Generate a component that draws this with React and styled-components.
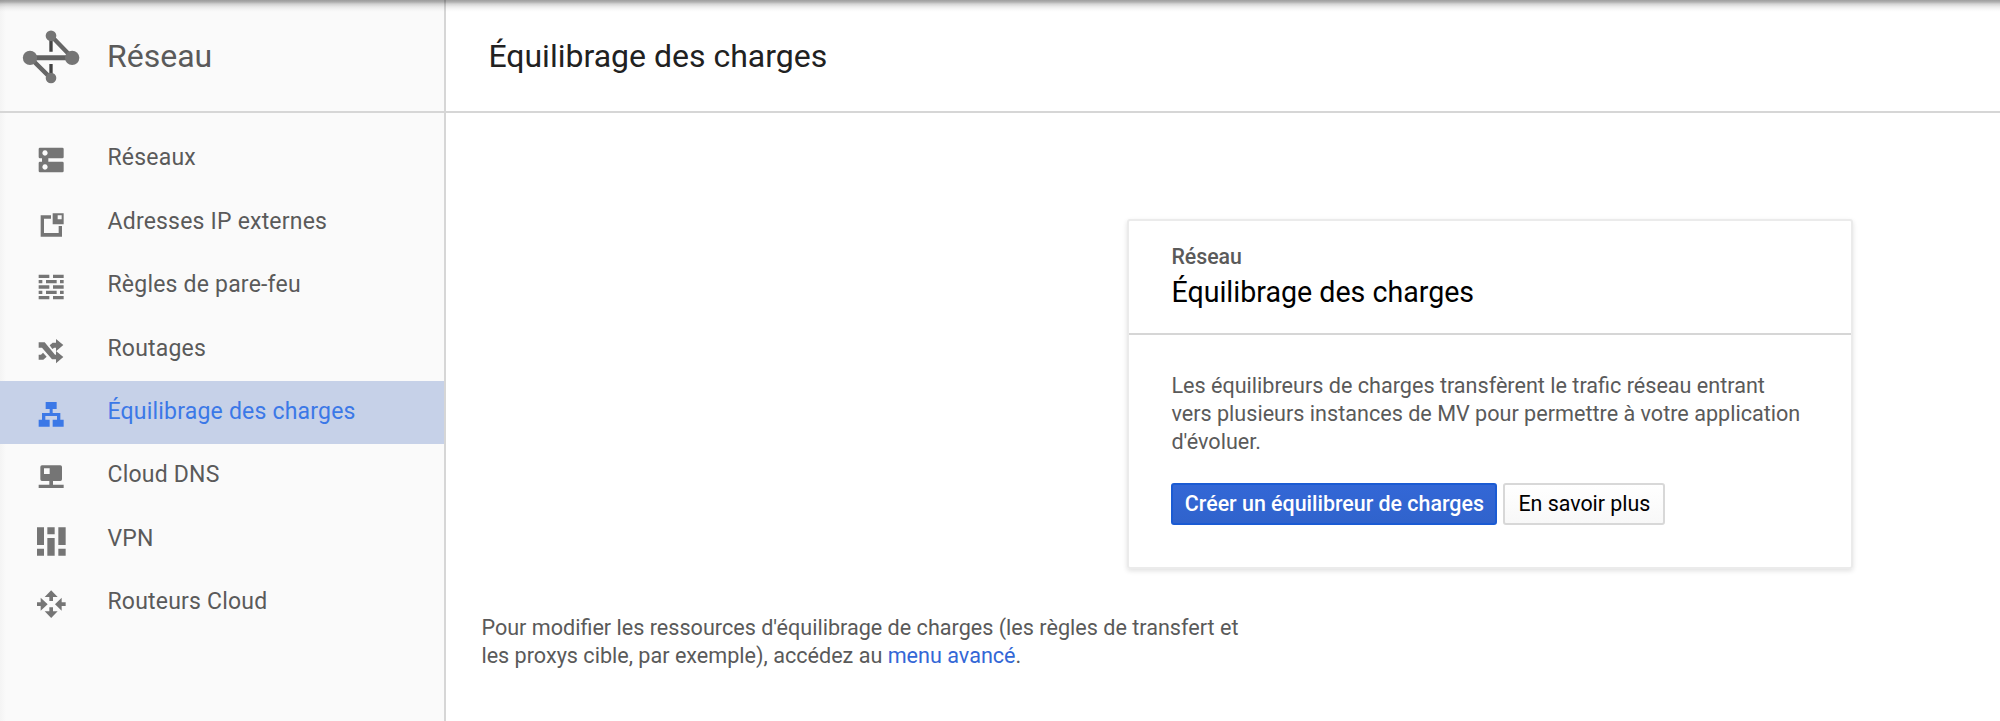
import React from "react";
import styled, { createGlobalStyle } from "styled-components";

const Global = createGlobalStyle`
  *, *::before, *::after { box-sizing: border-box; }
  body {
    margin: 0;
    background: #fff;
    color: #5a5a5a;
    font-family: Roboto, "Liberation Sans", sans-serif;
    overflow: hidden;
  }
`;

const Page = styled.div`
  position: relative;
  display: flex;
  height: 721px;
  overflow: hidden;
`;

const TopShadow = styled.div`
  position: absolute;
  inset: 0 0 auto 0;
  height: 12px;
  pointer-events: none;
  background: linear-gradient(
    rgba(0, 0, 0, 0.38) 0,
    rgba(0, 0, 0, 0.31) 2px,
    rgba(0, 0, 0, 0.17) 4px,
    rgba(0, 0, 0, 0.07) 7px,
    rgba(0, 0, 0, 0.02) 10px,
    rgba(0, 0, 0, 0) 12px
  );
`;

const Sidebar = styled.aside`
  display: flex;
  flex-direction: column;
  width: 446.4px;
  flex: none;
  border-right: 2px solid #d6d6d6;
  background: linear-gradient(90deg, #f4f4f4, #fafafa 6px);
`;

const Bar = styled.header`
  display: flex;
  align-items: center;
  height: 113px;
  flex: none;
  border-bottom: 2px solid #d6d6d6;
  padding-left: ${(p) => p.$inset}px;
`;

const Heading = styled.h1`
  margin: 1px 0 0;
  font-size: 32px;
  line-height: 40px;
  font-weight: 400;
  color: ${(p) => p.$color};
`;

const Logo = styled.svg`
  width: 58px;
  height: 54px;
  margin: 2px 27px 0 0;
`;

const Nav = styled.nav`
  display: flex;
  flex-direction: column;
  padding-top: 14.4px;
`;

const NavItem = styled.a`
  display: flex;
  align-items: flex-start;
  height: 63.4px;
  padding-left: 36px;
  color: ${(p) => (p.$active ? "#3b78e7" : "inherit")};
  background: ${(p) => (p.$active ? "#c6d1e8" : "transparent")};
`;

const NavIcon = styled.svg`
  width: 30px;
  height: 30px;
  margin: 18px 41.5px 0 0;
  fill: ${(p) => (p.$active ? "#3b78e7" : "#757575")};
`;

const NavLabel = styled.span`
  font-size: 23px;
  line-height: 62.4px;
  letter-spacing: 0.2px;
`;

const Main = styled.main`
  display: flex;
  flex-direction: column;
  flex: 1;
`;

const Card = styled.section`
  width: 726px;
  height: 350px;
  margin: 106px 0 0 681px;
  border: 2px solid #ebebeb;
  border-radius: 3px;
  box-shadow: 0 2px 5px rgba(0, 0, 0, 0.12);
`;

const CardHead = styled.div`
  height: 114px;
  padding: 21px 0 0 42px;
  border-bottom: 2px solid #d6d6d6;
`;

const Eyebrow = styled.div`
  font-size: 21.3px;
  line-height: 30px;
  font-weight: 500;
`;

const CardTitle = styled.h2`
  margin: 1px 0 0;
  font-size: 28.6px;
  line-height: 38px;
  font-weight: 400;
  color: #000;
`;

const CardBody = styled.div`
  padding: 37px 42px 0;
`;

const Text = styled.p`
  margin: 0;
  font-size: 21.6px;
  line-height: 28.1px;
  white-space: nowrap;
`;

const Actions = styled.div`
  display: flex;
  gap: 6px;
  margin-top: 27px;
`;

const Button = styled.button`
  width: ${(p) => p.$width}px;
  height: 42px;
  padding: 0 0 1px;
  border: 2px solid ${(p) => (p.$primary ? "#1b5bd3" : "#d8d8d8")};
  border-radius: 3px;
  background: ${(p) =>
    p.$primary
      ? "linear-gradient(#3367d6, #3063cc)"
      : "linear-gradient(#fff, #f8f8f8)"};
  color: ${(p) => (p.$primary ? "#fff" : "#000")};
  font-family: inherit;
  font-size: 21.4px;
  font-weight: ${(p) => (p.$primary ? 500 : 400)};
  white-space: nowrap;
`;

const Note = styled(Text)`
  margin: 45px 0 0 35px;
`;

const Link = styled.a`
  color: #3367d6;
`;

const items = [
  {
    label: "Réseaux",
    icon: (
      <path
        fillRule="evenodd"
        d="M12 8H79a4 4 0 0 1 4 4V36a4 4 0 0 1-4 4H37V50H79a4 4 0 0 1 4 4V78a4 4 0 0 1-4 4H12a4 4 0 0 1-4-4V54a4 4 0 0 1 4-4H18V40H12a4 4 0 0 1-4-4V12a4 4 0 0 1 4-4ZM27 16a8 8 0 1 0 .01 0ZM27 58a8 8 0 1 0 .01 0Z"
      />
    ),
  },
  {
    label: "Adresses IP externes",
    icon: (
      <path
        fillRule="evenodd"
        d="M14 19H45V29H24V72H68V51H78V83H14ZM50 13H83V46H50ZM65 19V31H77V19Z"
      />
    ),
  },
  {
    label: "Règles de pare-feu",
    icon: (
      <path d="M8 8h32v10H8zM51 8h32v10H51zM8 24h11v10H8zM30 24h32v10H30zM72 24h11v10H72zM8 40h32v10H8zM51 40h32v10H51zM8 56h11v10H8zM30 56h32v10H30zM72 56h11v10H72zM8 72h32v10H8zM51 72h32v10H51z" />
    ),
  },
  {
    label: "Routages",
    icon: (
      <path d="M8 19H26L57 56H60V45L82 63L60 82V70H48L18 35H8ZM41 28L50 20H60V9L82 27L60 46V35H55L49 39ZM8 56H15L21 50L32 62L22 71H8Z" />
    ),
  },
  {
    label: "Équilibrage des charges",
    active: true,
    icon: (
      <path d="M29 9H62V30H50V42H73V62H83V83H50V62H63V51H28V62H41V83H8V62H18V42H41V30H29Z" />
    ),
  },
  {
    label: "Cloud DNS",
    icon: (
      <path
        fillRule="evenodd"
        d="M18 10H73a5 5 0 0 1 5 5V52a5 5 0 0 1-5 5H51V68H83V78H8V68H40V57H18a5 5 0 0 1-5-5V15a5 5 0 0 1 5-5ZM24 19V36H41V19Z"
      />
    ),
  },
  {
    label: "VPN",
    icon: (
      <path d="M3 4H24V57H3ZM3 68H24V89H3ZM34 4H56V25H34ZM34 36H56V89H34ZM67 4H89V57H67ZM67 68H89V89H67Z" />
    ),
  },
  {
    label: "Routeurs Cloud",
    icon: (
      <path d="M45.5 4L65 24H51V36H40V24H26ZM45.5 87L65 67H51V55H40V67H26ZM3 40H14V26L35 45.5L14 65V51H3ZM89 40H77V26L57 45.5L77 65V51H89Z" />
    ),
  },
];

export default function App() {
  return (
    <>
      <Global />
      <Page>
        <Sidebar>
          <Bar $inset={22}>
            <Logo viewBox="66 88 174 162">
              <path d="M153 105L217 171M90 171L153 233" stroke="#666" strokeWidth="13" />
              <path d="M90 171.500H217" stroke="#616161" strokeWidth="15" />
              <path d="M153 118V153M153 190V220" stroke="#424242" strokeWidth="10" />
              <g fill="#757575">
                <circle cx="153" cy="105.500" r="16" />
                <circle cx="153" cy="232" r="16" />
                <circle cx="90" cy="171.500" r="21.500" />
                <circle cx="216.500" cy="171.500" r="21.500" />
              </g>
            </Logo>
            <Heading as="div" $color="#5a5a5a">
              Réseau
            </Heading>
          </Bar>
          <Nav>
            {items.map(({ label, icon, active }) => (
              <NavItem key={label} $active={active}>
                <NavIcon viewBox="0 0 90 90" $active={active}>
                  {icon}
                </NavIcon>
                <NavLabel>{label}</NavLabel>
              </NavItem>
            ))}
          </Nav>
        </Sidebar>
        <Main>
          <Bar $inset={42}>
            <Heading $color="#212121">Équilibrage des charges</Heading>
          </Bar>
          <Card>
            <CardHead>
              <Eyebrow>Réseau</Eyebrow>
              <CardTitle>Équilibrage des charges</CardTitle>
            </CardHead>
            <CardBody>
              <Text>
                Les équilibreurs de charges transfèrent le trafic réseau entrant
                <br />
                vers plusieurs instances de MV pour permettre à votre application
                <br />
                d'évoluer.
              </Text>
              <Actions>
                <Button $primary $width={326}>
                  Créer un équilibreur de charges
                </Button>
                <Button $width={162}>En savoir plus</Button>
              </Actions>
            </CardBody>
          </Card>
          <Note>
            Pour modifier les ressources d'équilibrage de charges (les règles de transfert et
            <br />
            les proxys cible, par exemple), accédez au <Link>menu avancé</Link>.
          </Note>
        </Main>
        <TopShadow />
      </Page>
    </>
  );
}
